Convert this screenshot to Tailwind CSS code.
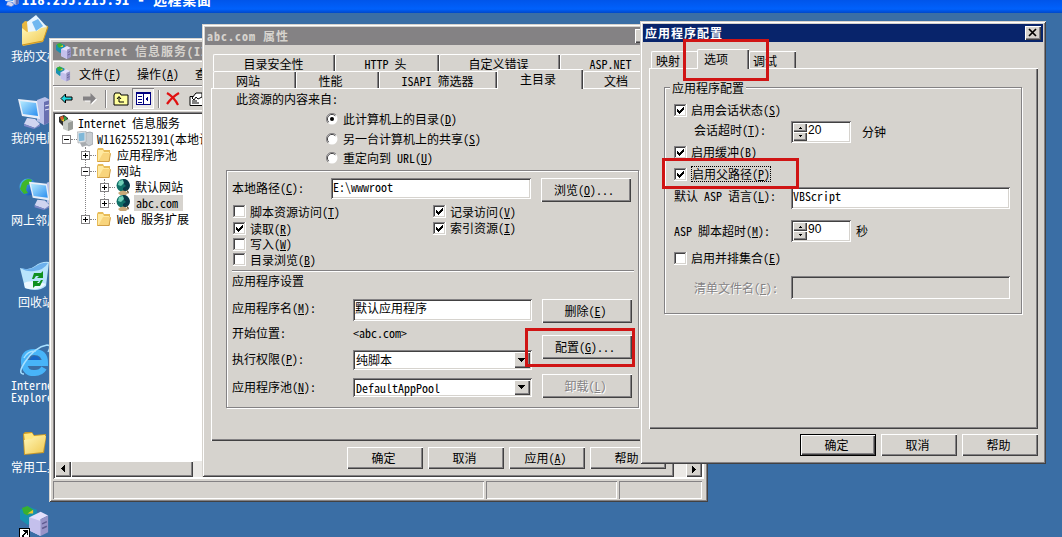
<!DOCTYPE html>
<html lang="zh-CN">
<head>
    <meta charset="UTF-8" />
    <meta name="viewport" content="width=device-width, initial-scale=1.0"/>
    <title>远程桌面</title>
    <script src="https://cdn.jsdelivr.net/npm/@tailwindcss/browser@4"></script>
</head>
<body class="relative w-[1062px] h-[537px] overflow-hidden bg-[#3a6ea5] text-black text-[12px] leading-[18px] whitespace-nowrap font-['Noto_Sans_CJK_SC',sans-serif] [font-feature-settings:'hwid'] [&_u]:underline-offset-1 [&_svg]:shrink-0 [&_svg]:block [&_button]:bg-[#d6d3ce] [&_button]:shrink-0 [&_button]:shadow-[inset_1px_1px_#fff,inset_-1px_-1px_#424142,inset_-2px_-2px_#848284]">

<!-- Shared icons -->
<svg class="absolute w-0 h-0">
    <defs>
        <linearGradient id="screen" x2="1" y2="1"><stop stop-color="#b8ecff"/><stop offset="1" stop-color="#2a8ef0"/></linearGradient>
        <linearGradient id="yellow" x2="1" y2="1"><stop stop-color="#fff7b8"/><stop offset="1" stop-color="#f0c850"/></linearGradient>
        <linearGradient id="globe" x2="1" y2="1"><stop stop-color="#4cc8f0"/><stop offset="1" stop-color="#1040b0"/></linearGradient>
    </defs>
    <symbol id="box" viewBox="0 0 13 13" shape-rendering="crispEdges">
        <path fill="#fff" d="M0 0h13v13H0z"/><path fill="#848284" d="M0 0h12v1H1v11H0z"/><path fill="#424142" d="M1 1h10v1H2v9H1z"/><path fill="#d6d3ce" d="M11 1h1v11H1v-1h10z"/>
    </symbol>
    <symbol id="checked" viewBox="0 0 13 13" shape-rendering="crispEdges">
        <use href="#box"/><path d="M3 5h1v1h1v1h1V6h1V5h1V4h1V3h1v3H9v1H8v1H7v1H6v1H5V9H4V8H3z"/>
    </symbol>
    <symbol id="radio" viewBox="0 0 12 12">
        <circle cx="6" cy="6" r="5.5" fill="#fff"/><path d="M10 2A5.5 5.5 0 0 0 2 10" fill="none" stroke="#848284"/><path d="M9.3 2.8A4.5 4.5 0 0 0 2.7 9.2" fill="none" stroke="#424142"/>
    </symbol>
    <symbol id="minus" viewBox="0 0 9 9" shape-rendering="crispEdges"><path fill="#fff" stroke="#848284" d="M.5.5h8v8h-8z"/><path d="M2 4h5v1H2z"/></symbol>
    <symbol id="plus" viewBox="0 0 9 9" shape-rendering="crispEdges"><use href="#minus"/><path d="M4 2h1v5H4z"/></symbol>
    <symbol id="folder" viewBox="0 0 16 16">
        <path fill="#e8bc58" d="M1 3l1-2h5l1 2h6v11l-1 1H1z"/><path fill="#ffe9a0" d="M2 3h5l1 2h5v9H2z"/><path fill="#f8d47c" d="M7 6h8l-2 9H2z"/><path fill="none" stroke="#c08830" stroke-width=".7" d="M2 14.500h11l1.500-8"/>
    </symbol>
    <symbol id="earth" viewBox="0 0 16 16">
        <circle cx="8" cy="6.500" r="6.500" fill="#107068"/><path fill="#083848" d="M8 0a6.500 6.500 0 0 1 5 11L8 13V9l3-2-3-3z"/><path fill="#70d0b8" d="M4 2l4-1 1 3-3 3-3-1z"/><path fill="#c8a878" d="M3 14q5-5 10 0l-2 2H5z"/><path fill="#604828" d="M11 10l3 3-1 2z"/>
    </symbol>
    <symbol id="server" viewBox="0 0 16 16">
        <path fill="#1890b0" d="M0 2l4-2 5 2v6l-5 2-4-3z"/><path fill="#38b030" d="M1 1l3-1 3 2-3 3-2-1z"/><path fill="#e8c830" d="M4 4l3-2v2z"/><path fill="#e4e0fc" d="M5 6l6-3 4 2-4 2v9l-6-3z"/><path fill="#c4c0ec" d="M5 6l6 2v8l-6-3z"/><path fill="#9894c8" d="M11 7l4-2v9l-4 2z"/><path stroke="#605c90" stroke-width=".8" d="M11.800 9.500l2.500-1.200M11.800 12l2.500-1.200"/>
    </symbol>
    <symbol id="toolbox" viewBox="0 0 16 16">
        <path fill="#303030" d="M1 2l5-2 4 3v7l-5 1-4-4z"/><path fill="#e06028" d="M2 2l3-1 1 3-3 1z"/><path fill="#30a040" d="M6 1l3 2-1 3-2-1z"/><path fill="#e8c830" d="M3 5l3-1v3z"/><path fill="#c8ccc8" d="M5 7l5-3 5 2v8l-5 2-5-2z"/><path fill="#989c98" d="M10 8l5-2v8l-5 2z"/>
    </symbol>
    <symbol id="computer" viewBox="0 0 34 34">
        <path fill="#b8c0e8" d="M20 5l8-3 5 3v22l-6 3-7-4z"/><path fill="#6870b0" d="M27 7l6-2v22l-6 3z"/><path stroke="#e8ecff" d="M28 11l4-1M28 15l4-1"/>
        <path fill="#e8eef8" d="M1 4l19 2 3 18-18-3z"/><path fill="url(#screen)" d="M3 6l16 2 2 13-15-2z"/><path fill="#d0d4f0" d="M10 23l8 1 5 5-5 4-11-4z"/><path fill="#8088c8" d="M7 29l11 4 5-4v2l-6 3-10-3z"/>
    </symbol>
    <symbol id="down" viewBox="0 0 16 16" shape-rendering="crispEdges"><path d="M4 6h7v1h-1v1H9v1H8v1H7V9H6V8H5V7H4z"/></symbol>
</svg>

<!-- Remote session bar -->
<header class="absolute inset-x-0 top-0 h-[13px] overflow-hidden bg-linear-to-b from-[#0055ea] via-[#0061fc] via-70% to-[#0048c8] flex">
    <svg class="ml-[3px] -mt-[9px] w-4 h-4"><use href="#computer"/></svg>
    <span class="ml-[3px] -mt-[10px] text-[14px] tracking-[0.7px] font-bold text-white">118.255.215.91 - 远程桌面</span>
</header>

<!-- Desktop icons -->
<section class="absolute left-0 top-[15px] w-[60px] text-white">
    <div class="h-[80px] pl-[11px]">
        <svg class="ml-[9px] w-[29px] h-[32px]" viewBox="0 0 29 32"><path fill="#e8b840" d="M2 9l3-3 6 1 17 4-5 16-20 4z"/><path fill="#e8f6ff" d="M7 7l9-7 11 12-9 9-10-3z"/><path fill="#70b8f0" d="M12 7l6-3 5 7-7 5z"/><path fill="url(#yellow)" d="M2 13l5 4 10-1 4-3 6-1-4 14-21 4z"/><path fill="none" stroke="#d09820" d="M2 30l21-4 5-14"/></svg>
        <p>我的文档</p>
    </div>
    <div class="h-[82px] pl-[11px]">
        <svg class="ml-[6px] w-[34px] h-[34px]"><use href="#computer"/></svg>
        <p>我的电脑</p>
    </div>
    <div class="h-[82px] pl-[11px]">
        <svg class="ml-[7px] w-[34px] h-[34px]" viewBox="0 0 34 34"><circle cx="10" cy="10" r="8.500" fill="url(#globe)"/><path fill="#40b828" d="M4 6q5-6 10-3l-2 4-3 1-1 5 2 3-4 1-4-5z"/><use href="#computer" x="10" y="1" width="32" height="32"/></svg>
        <p>网上邻居</p>
    </div>
    <div class="h-[83px] pl-[18px]">
        <svg class="ml-[2px] mt-[2px] w-[29px] h-[32px]" viewBox="0 0 29 32"><path fill="#b8e4fc" d="M0 7q9 3 15-2 7-5 14-4l-3 24q-8 7-21 2z"/><path fill="#6cb0ec" d="M1 7q9 3 15-2 7-4 12-3-4 7-14 8-8 1-13-3z"/><path fill="#ecf8ff" d="M4 22q6-4 22 1-8 8-21 4z"/><path fill="#109020" d="M14 12h7l2-2v7h-6l2-2h-3l-2 3h-2zM23 19l-3 6h-5l-2 2v-7h6l-2 2h2l2-3z"/></svg>
        <p>回收站</p>
    </div>
    <div class="h-[84px] pl-[11px] leading-[12px]">
        <svg class="ml-[8px] w-[32px] h-[34px]" viewBox="0 0 32 34"><path fill="none" stroke="#48b4f8" stroke-width="6" d="M4 19h22q0-11-11-11T5 19t11 10q6 0 9-5"/><path fill="none" stroke="#a8e0ff" stroke-width="1.500" d="M5 14q4-8 12-7M5 30Q-2 30 6 18 16 3 28 1q5 0 1 7"/><path fill="#1868c8" d="M11 16q1-4 5-4 4 0 5 4z"/></svg>
        <p class="mt-px">Internet</p>
        <p>Explorer</p>
    </div>
    <div class="h-[78px] pl-[11px]">
        <svg class="ml-[11px] mt-[2px] w-[26px] h-[26px]" viewBox="0 0 26 26"><path fill="#c89828" d="M1 4l2-2h7l2 3 12-1v5l-2 14-20 2z"/><path fill="#ffe880" d="M2 4l8-1 2 3 11-1v4L3 12z"/><path fill="url(#yellow)" d="M2 10l8-1 2-2 12-1-3 16-18 2z"/></svg>
        <p class="mt-[2px]">常用工具</p>
    </div>
    <div class="relative -mt-[4px] pl-[20px]">
        <svg class="mt-[1px] w-[30px] h-[32px]"><use href="#server"/></svg>
        <svg class="absolute left-[19px] top-[23px] w-[11px] h-[11px]" viewBox="0 0 11 11" shape-rendering="crispEdges"><path fill="#fff" stroke="#000" d="M.5.500h10v10H.500z"/><path d="M4 2h5v5H8V5H7v1H6v1H5v2H3V7h1V6h1V5h1V4H5V3H4z"/></svg>
    </div>
</section>

<!-- IIS manager -->
<section class="absolute left-[49px] top-[38px] w-[659px] h-[464px] p-1 bg-[#d6d3ce] shadow-[inset_1px_1px_#d6d3ce,inset_-1px_-1px_#424142,inset_2px_2px_#fff,inset_-2px_-2px_#848284]">
    <div class="flex items-center h-[18px] pl-[3px] bg-[#848284] text-[#d6d3ce] font-bold tracking-[1px]">
        <svg class="w-4 h-4"><use href="#server"/></svg><span>Internet 信息服务(IIS)管理器</span>
    </div>
    <div class="flex items-center h-[25px] mt-px pl-[2px] border-t border-l border-white">
        <svg class="w-[15px] h-4 mr-2"><use href="#server"/></svg>
        <span class="w-[58px]">文件(<u>F</u>)</span>
        <span class="w-[58px]">操作(<u>A</u>)</span>
        <span>查看(<u>V</u>)</span>
    </div>
    <div class="flex items-center h-[25px] pl-[6px] border-t border-l border-b border-white shadow-[0_-1px_#848284]">
        <svg class="w-[13px] h-[11px]" viewBox="0 0 13 11"><path fill="#20d8e0" stroke="#000" d="M1 5.500L5.500 1v3H12v3H5.500v3z"/></svg>
        <svg class="ml-[10px] w-[14px] h-[12px]" viewBox="0 0 14 12"><path fill="#fff" d="M14 6.500L8.500 12V8.500H2v-4h6.500V2z"/><path fill="#848284" d="M13 5.500L7.500 0v3.500H0v4h7.500V11z"/></svg>
        <i class="ml-[8px] w-[2px] h-[18px] bg-[#848284] border-r border-white"></i>
        <svg class="ml-[6px] w-4 h-[14px]" viewBox="0 0 16 14"><path fill="#ffff9c" stroke="#000" d="M1 13V3l1-2h5l1 2h7v10z"/><path fill="none" stroke="#000" d="M6 5v5h5M4 7l2-2.500L8 7"/></svg>
        <span class="ml-[3px] w-[22px] h-[21px] flex items-center justify-center bg-[#ebe9e6] shadow-[inset_1px_1px_#848284,inset_-1px_-1px_#fff]"><svg class="w-[15px] h-[13px]" viewBox="0 0 15 13" shape-rendering="crispEdges"><path fill="#fff" stroke="#000080" d="M.500.500h14v12H.500zM7.500 0v13"/><path fill="#000080" d="M0 0h15v2H0zM2 4h4v1H2zM2 7h4v1H2zM2 10h4v1H2zM12 4v6l-3-3z"/></svg></span>
        <i class="ml-[4px] w-[2px] h-[18px] bg-[#848284] border-r border-white"></i>
        <svg class="ml-[6px] w-[14px] h-[14px]" viewBox="0 0 14 14"><path fill="none" stroke="#e01010" stroke-width="2.200" d="M1 1q7 4 11 12M13 1Q6 5 1 12"/></svg>
        <svg class="ml-[9px] w-4 h-[14px]" viewBox="0 0 16 14"><path fill="#fff" stroke="#000" d="M1 4.500h13v9H1zM3 9h5M3 11h7"/><path fill="#fff" stroke="#000" d="M3 6l4-5h6v4L9 7 7 5 5 8z"/></svg>
    </div>
    <div class="h-[367px] mt-px pt-[3px] pl-[2px] pr-[2px] bg-white flex flex-col shadow-[inset_1px_1px_#848284,inset_-1px_-1px_#fff,inset_2px_2px_#424142] leading-4">
        <div class="flex items-center h-4 pl-[3px]"><svg class="w-4 h-4"><use href="#toolbox"/></svg><span class="pl-1">Internet 信息服务</span></div>
        <div class="flex items-center h-4 pl-[7px]"><svg class="w-[9px] h-[9px]"><use href="#minus"/></svg><i class="w-[6px] border-t border-dotted border-[#848284]"></i>
            <svg class="w-4 h-4" viewBox="0 0 16 16"><path fill="#c8ccd0" stroke="#808890" stroke-width=".6" d="M8 2l5-1 3 1v11l-4 2-4-2z"/><path fill="#e0e4e8" stroke="#909498" stroke-width=".5" d="M0 1l9-1v11l-8 1z"/><path fill="#80b8d8" d="M1.500 2.500l6-1v8l-5.500.800z"/><path fill="#a8acb0" d="M3 12l5-1 3 3-6 2z"/></svg><span class="pl-1">W11625521391(本地计算机)</span></div>
        <div class="ml-[30px] border-l border-dotted border-[#848284] h-[72px]">
            <div class="-ml-[5px]">
                <div class="flex items-center h-4"><svg class="w-[9px] h-[9px]"><use href="#plus"/></svg><i class="w-[6px] border-t border-dotted border-[#848284]"></i><svg class="w-4 h-4"><use href="#folder"/></svg><span class="pl-[5px]">应用程序池</span></div>
                <div class="flex items-center h-4"><svg class="w-[9px] h-[9px]"><use href="#minus"/></svg><i class="w-[6px] border-t border-dotted border-[#848284]"></i><svg class="w-4 h-4"><use href="#folder"/></svg><span class="pl-[5px]">网站</span></div>
                <div class="ml-[23px] h-6 border-l border-dotted border-[#848284]">
                    <div class="-ml-[5px]">
                        <div class="flex items-center h-4"><svg class="w-[9px] h-[9px]"><use href="#plus"/></svg><i class="w-[6px] border-t border-dotted border-[#848284]"></i><svg class="w-4 h-4"><use href="#earth"/></svg><span class="pl-[4px]">默认网站</span></div>
                        <div class="flex items-center h-4"><svg class="w-[9px] h-[9px]"><use href="#plus"/></svg><i class="w-[6px] border-t border-dotted border-[#848284]"></i><svg class="w-4 h-4"><use href="#earth"/></svg><span class="ml-[3px] pl-[2px] pr-[5px] h-4 bg-[#d6d3ce]">abc.com</span></div>
                    </div>
                </div>
                <div class="flex items-center h-4 mt-2"><svg class="w-[9px] h-[9px]"><use href="#plus"/></svg><i class="w-[6px] border-t border-dotted border-[#848284]"></i><svg class="w-4 h-4"><use href="#folder"/></svg><span class="pl-[5px]">Web 服务扩展</span></div>
            </div>
        </div>
        <div class="mt-auto mb-[2px] flex h-4 bg-[#ebe9e6]">
            <button class="w-4 h-4"><svg class="w-4 h-4 rotate-90"><use href="#down"/></svg></button>
            <button class="w-[122px] h-4"></button>
            <button class="ml-auto w-4 h-4"><svg class="w-4 h-4 -rotate-90"><use href="#down"/></svg></button>
        </div>
    </div>
    <div class="mt-[2px] flex gap-[2px] h-[18px]">
        <span class="w-[431px] shadow-[inset_1px_1px_#848284,inset_-1px_-1px_#fff]"></span>
        <span class="w-[131px] shadow-[inset_1px_1px_#848284,inset_-1px_-1px_#fff]"></span>
        <span class="w-[83px] shadow-[inset_1px_1px_#848284,inset_-1px_-1px_#fff]"></span>
    </div>
</section>

<!-- Site properties -->
<section class="absolute left-[202px] top-[24px] w-[472px] h-[453px] p-[3px] bg-[#d6d3ce] shadow-[inset_1px_1px_#d6d3ce,inset_-1px_-1px_#424142,inset_2px_2px_#fff,inset_-2px_-2px_#848284]">
    <div class="flex items-center h-[18px] pl-[2px] bg-[#848284] text-[#d6d3ce] font-bold tracking-[1px]">
        <span>abc.com 属性</span><button class="ml-auto mr-[20px] w-4 h-[14px]"></button>
    </div>
    <div class="flex mt-[9px] ml-2 h-[17px] text-center [&>span]:border-t [&>span]:border-l [&>span]:border-white [&>span]:rounded-tl-[2px] [&>span]:shadow-[inset_-1px_0_#424142,inset_-2px_0_#848284]">
        <span class="w-[122px] pr-[2px]">目录安全性</span><span class="w-[104px] pr-[4px]">HTTP 头</span><span class="w-[121px] pr-[3px]">自定义错误</span><span class="w-[102px] pr-[2px]">ASP.NET</span>
    </div>
    <div class="flex ml-2 h-[17px] text-center [&>span]:border-t [&>span]:border-l [&>span]:border-white [&>span]:rounded-tl-[2px] [&>span]:shadow-[inset_-1px_0_#424142,inset_-2px_0_#848284]">
        <span class="w-[83px] pr-[14px]">网站</span><span class="w-[83px] pr-[15px]">性能</span><span class="w-[118px] pr-[2px]">ISAPI 筛选器</span><span class="relative z-10 w-[86px] pr-[5px] -mt-[2px] h-[20px] bg-[#d6d3ce]">主目录</span><span class="w-[83px] pr-[18px]">文档</span>
    </div>
    <div class="ml-[6px] w-[455px] h-[353px] border-t border-l border-white shadow-[inset_-1px_-1px_#424142,inset_-2px_-2px_#848284]">
        <p class="h-[20px] pl-6 leading-[20px]">此资源的内容来自:</p>
        <div class="pl-[114px]">
            <div class="flex items-center h-[20px] gap-[5px]"><svg class="w-3 h-3"><use href="#radio"/><circle cx="6" cy="6" r="2"/></svg><span>此计算机上的目录(<u>D</u>)</span></div>
            <div class="flex items-center h-[20px] gap-[5px]"><svg class="w-3 h-3"><use href="#radio"/></svg><span>另一台计算机上的共享(<u>S</u>)</span></div>
            <div class="flex items-center h-[18px] gap-[5px]"><svg class="w-3 h-3"><use href="#radio"/></svg><span>重定向到 URL(<u>U</u>)</span></div>
        </div>
        <div class="ml-[14px] mt-[3px] w-[413px] h-[238px] pt-[7px] pl-[6px] border border-[#848284] shadow-[1px_1px_#fff,inset_1px_1px_#fff]">
            <div class="flex h-6">
                <label class="-ml-px w-[99px] h-[20px] leading-[20px]">本地路径(<u>C</u>):</label>
                <span class="w-[200px] h-[21px] pl-[2px] bg-white shadow-[inset_1px_1px_#848284,inset_-1px_-1px_#fff,inset_2px_2px_#424142,inset_-2px_-2px_#d6d3ce]">E:\wwwroot</span>
                <button class="ml-[10px] w-[90px] h-6 pr-[4px]">浏览(<u>O</u>)...</button>
            </div>
            <div class="flex mt-px h-[67px]">
                <div class="w-[200px]">
                    <div class="flex items-center h-[17px] gap-1"><svg class="w-[13px] h-[13px]"><use href="#box"/></svg><span>脚本资源访问(<u>T</u>)</span></div>
                    <div class="flex items-center h-[17px] gap-1"><svg class="w-[13px] h-[13px]"><use href="#checked"/></svg><span>读取(<u>R</u>)</span></div>
                    <div class="flex items-center h-[14px] gap-1"><svg class="w-[13px] h-[13px]"><use href="#box"/></svg><span>写入(<u>W</u>)</span></div>
                    <div class="flex items-center h-[17px] gap-1"><svg class="w-[13px] h-[13px]"><use href="#box"/></svg><span>目录浏览(<u>B</u>)</span></div>
                </div>
                <div>
                    <div class="flex items-center h-[17px] gap-1"><svg class="w-[13px] h-[13px]"><use href="#checked"/></svg><span>记录访问(<u>V</u>)</span></div>
                    <div class="flex items-center h-[16px] gap-1"><svg class="w-[13px] h-[13px]"><use href="#checked"/></svg><span>索引资源(<u>I</u>)</span></div>
                </div>
            </div>
            <div class="-ml-px w-[402px] h-[2px] bg-[#848284] border-b border-white"></div>
            <p class="-ml-px">应用程序设置</p>
            <div class="flex mt-[9px]">
                <div class="w-[309px] [&_label]:-ml-px [&_label]:mr-px">
                    <div class="flex h-[22px]"><label class="w-[120px]">应用程序名(<u>M</u>):</label><span class="w-[179px] pl-[2px] bg-white shadow-[inset_1px_1px_#848284,inset_-1px_-1px_#fff,inset_2px_2px_#424142,inset_-2px_-2px_#d6d3ce]">默认应用程序</span></div>
                    <div class="flex h-4 mt-1 leading-4"><label class="w-[120px]">开始位置:</label><span>&lt;abc.com&gt;</span></div>
                    <div class="flex h-5 mt-[9px]"><label class="w-[120px]">执行权限(<u>P</u>):</label><span class="flex justify-between w-[179px] p-[2px] leading-4 bg-white shadow-[inset_1px_1px_#848284,inset_-1px_-1px_#fff,inset_2px_2px_#424142,inset_-2px_-2px_#d6d3ce]"><span class="pl-px">纯脚本</span><button class="w-4 h-4"><svg class="w-4 h-4"><use href="#down"/></svg></button></span></div>
                    <div class="flex h-[19px] mt-2"><label class="w-[120px]">应用程序池(<u>N</u>):</label><span class="flex justify-between w-[179px] p-[2px] leading-4 bg-white shadow-[inset_1px_1px_#848284,inset_-1px_-1px_#fff,inset_2px_2px_#424142,inset_-2px_-2px_#d6d3ce]"><span class="pl-px">DefaultAppPool</span><button class="w-4 h-[15px]"><svg class="w-4 h-4 -mt-px"><use href="#down"/></svg></button></span></div>
                </div>
                <div class="flex flex-col w-[90px]">
                    <button class="h-6 pr-[3px]">删除(<u>E</u>)</button>
                    <button class="h-6 mt-3 pr-[4px]">配置(<u>G</u>)...</button>
                    <button class="h-6 mt-[15px] pr-[3px] text-[#848284] text-shadow-[1px_1px_#fff]">卸载(<u>L</u>)</button>
                </div>
            </div>
        </div>
    </div>
    <div class="flex gap-[5px] mt-[6px] ml-[142px] [&>button]:pr-[3px]">
        <button class="w-[76px] h-[22px]">确定</button>
        <button class="w-[76px] h-[22px]">取消</button>
        <button class="w-[76px] h-[22px]">应用(<u>A</u>)</button>
        <button class="w-[76px] h-[22px]">帮助</button>
    </div>
</section>

<!-- Application configuration -->
<section class="absolute left-[640px] top-[21px] w-[406px] h-[443px] p-[3px] bg-[#d6d3ce] shadow-[inset_1px_1px_#d6d3ce,inset_-1px_-1px_#424142,inset_2px_2px_#fff,inset_-2px_-2px_#848284]">
    <div class="flex items-center h-[18px] pl-[2px] pr-[2px] bg-[#08246b] text-white font-bold tracking-[1px]">
        <span>应用程序配置</span><button class="ml-auto w-4 h-[14px]"><svg class="w-4 h-[14px]" viewBox="0 0 16 14"><path fill="none" stroke="#000" stroke-width="1.700" d="M4 3l7 7M11 3l-7 7"/></svg></button>
    </div>
    <div class="flex mt-[9px] ml-2 h-[17px] [&>span]:border-t [&>span]:border-l [&>span]:border-white [&>span]:rounded-tl-[2px]">
        <span class="w-[46px] pl-1">映射</span><span class="relative z-10 w-[52px] -mt-[2px] h-[20px] pl-[6px] bg-[#d6d3ce] shadow-[inset_-1px_0_#424142,inset_-2px_0_#848284]">选项</span><span class="w-[47px] pl-[3px] shadow-[inset_-1px_0_#424142,inset_-2px_0_#848284]">调试</span>
    </div>
    <div class="ml-[6px] w-[389px] h-[361px] pt-[18px] border-t border-l border-white shadow-[inset_-1px_-1px_#424142,inset_-2px_-2px_#848284]">
        <div class="ml-[14px] w-[358px] h-[227px] border border-[#848284] shadow-[1px_1px_#fff,inset_1px_1px_#fff]">
            <p class="-mt-[9px] ml-[5px] w-fit px-[2px] bg-[#d6d3ce]">应用程序配置</p>
            <div class="pl-[9px]">
                <div class="flex items-center h-[18px] mt-1 gap-1"><svg class="w-[13px] h-[13px]"><use href="#checked"/></svg><span>启用会话状态(<u>S</u>)</span></div>
                <div class="flex h-[22px] mt-[2px]">
                    <label class="pl-[20px] w-[117px]">会话超时(<u>T</u>):</label>
                    <span class="flex w-[60px] p-[2px] bg-white leading-4 shadow-[inset_1px_1px_#848284,inset_-1px_-1px_#fff,inset_2px_2px_#424142,inset_-2px_-2px_#d6d3ce]"><span class="flex flex-col w-[14px]"><button class="h-[9px]"><svg class="w-[14px] h-[9px]" viewBox="0 0 14 9" shape-rendering="crispEdges"><path d="M7 4h1v1h1v1H6V5h1z"/></svg></button><button class="h-[9px]"><svg class="w-[14px] h-[9px]" viewBox="0 0 14 9" shape-rendering="crispEdges"><path d="M6 3h3v1H8v1H7V4H6z"/></svg></button></span><span class="pl-px leading-[14px] font-['Liberation_Sans',sans-serif]">20</span></span>
                    <span class="pl-[11px] leading-[21px]">分钟</span>
                </div>
                <div class="flex items-center h-[18px] gap-1"><svg class="w-[13px] h-[13px]"><use href="#checked"/></svg><span>启用缓冲(<u>B</u>)</span></div>
                <div class="flex items-center h-[18px] mt-1 gap-1"><svg class="w-[13px] h-[13px]"><use href="#checked"/></svg><span class="h-4 leading-[14px] w-[80px] border border-dotted border-black">启用父路径(<u>P</u>)</span></div>
                <div class="flex h-[22px] mt-1"><label class="w-[117px]">默认 ASP 语言(<u>L</u>):</label><span class="w-[219px] pl-[2px] leading-[17px] bg-white shadow-[inset_1px_1px_#848284,inset_-1px_-1px_#fff,inset_2px_2px_#424142,inset_-2px_-2px_#d6d3ce]">VBScript</span></div>
                <div class="flex h-[22px] mt-[11px]">
                    <label class="w-[117px] leading-[22px]">ASP 脚本超时(<u>M</u>):</label>
                    <span class="flex w-[60px] p-[2px] bg-white leading-4 shadow-[inset_1px_1px_#848284,inset_-1px_-1px_#fff,inset_2px_2px_#424142,inset_-2px_-2px_#d6d3ce]"><span class="flex flex-col w-[14px]"><button class="h-[9px]"><svg class="w-[14px] h-[9px]" viewBox="0 0 14 9" shape-rendering="crispEdges"><path d="M7 4h1v1h1v1H6V5h1z"/></svg></button><button class="h-[9px]"><svg class="w-[14px] h-[9px]" viewBox="0 0 14 9" shape-rendering="crispEdges"><path d="M6 3h3v1H8v1H7V4H6z"/></svg></button></span><span class="pl-px leading-[14px] font-['Liberation_Sans',sans-serif]">90</span></span>
                    <span class="pl-[5px] leading-[21px]">秒</span>
                </div>
                <div class="flex items-center h-[18px] mt-[7px] gap-1"><svg class="w-[13px] h-[13px]"><use href="#box"/></svg><span>启用并排集合(<u>E</u>)</span></div>
                <div class="flex h-[23px] mt-[9px] text-[#848284] text-shadow-[1px_1px_#fff]"><label class="pl-[20px] w-[117px] leading-[23px]">清单文件名(<u>F</u>):</label><span class="w-[219px] shadow-[inset_1px_1px_#848284,inset_-1px_-1px_#fff,inset_2px_2px_#424142]"></span></div>
            </div>
        </div>
    </div>
    <div class="flex gap-[5px] mt-[5px] ml-[157px] [&_button]:pr-[3px]">
        <div class="flex w-[76px] h-[22px] border border-black"><button class="flex-1">确定</button></div>
        <button class="w-[76px] h-[22px]">取消</button>
        <button class="w-[76px] h-[22px]">帮助</button>
    </div>
</section>

<!-- Highlight frames -->
<div class="absolute left-[525px] top-[328px] w-[110px] h-[39px] border-3 border-[#d01414]"></div>
<div class="absolute left-[683px] top-[39px] w-[86px] h-[42px] border-3 border-[#d01414]"></div>
<div class="absolute left-[662px] top-[158px] w-[137px] h-[31px] border-3 border-[#d01414]"></div>

</body>
</html>
